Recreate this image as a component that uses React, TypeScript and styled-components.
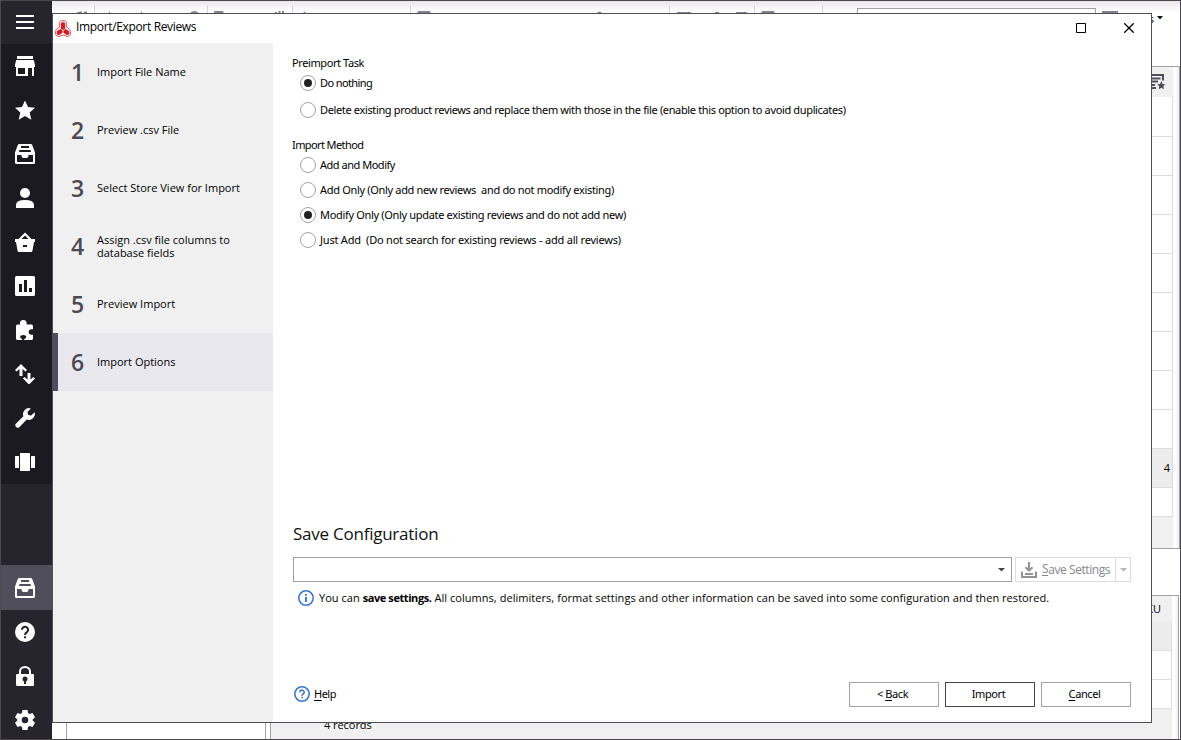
import React from "react";
import styled, { createGlobalStyle, css } from "styled-components";

const UI = `"Open Sans", "Noto Sans", sans-serif`;
const DIALOG_UI = `"Noto Sans", "Open Sans", sans-serif`;

const GlobalStyle = createGlobalStyle`
  * { box-sizing: border-box; }
  body { margin: 0; background: #fff; font-family: ${UI}; font-size: 11px; color: #000; }
`;

const AppFrame = styled.div`
  position: relative;
  display: flex;
  width: 1181px;
  height: 740px;
  overflow: hidden;
  border: 1px solid #4a474e;
  background: #fff;
`;

/* ---------- sidebar ---------- */

const Sidebar = styled.nav`
  display: flex;
  flex-direction: column;
  width: 51px;
  flex: none;
  background: #26252d;
`;

const NavGroup = styled.div`
  background: #1b1a20;
`;

const NavItem = styled.div<{ $active?: boolean; $first?: boolean }>`
  display: flex;
  align-items: center;
  height: ${(p) => (p.$first ? 43 : 44)}px;
  padding: ${(p) => (p.$first ? "0 0 1px 14px" : "0 0 0 14px")};
  flex: none;
  background: ${(p) => (p.$active ? "#504e5a" : "transparent")};
  box-shadow: ${(p) => (p.$active ? "0 -1px 0 #504e5a" : "none")};
  svg { display: block; }
`;

const NavSpacer = styled.div`
  height: 82px;
  flex: none;
`;

/* ---------- window behind the dialog ---------- */

const Main = styled.div`
  display: flex;
  flex-direction: column;
  flex: 1;
  min-width: 0;
  height: 738px;
`;

const Toolbar = styled.div`
  display: flex;
  height: 65px;
  flex: none;
  padding-top: 4px;
  background: linear-gradient(#e9e7eb, #f7f6f8 7px, #fff 12px);
`;

const ToolGroup = styled.div<{ $w: number }>`
  width: ${(p) => p.$w}px;
  height: 46px;
  flex: none;
  border-right: 1px solid #d5d4d8;
  svg { display: block; }
`;

const SearchBox = styled.div`
  width: 239px;
  height: 22px;
  margin: 3px 6px 0 34px;
  flex: none;
  border: 1px solid #a0a0a4;
  background: #fff;
`;

const ToolButton = styled.div`
  width: 16px;
  height: 16px;
  margin: 6px 1px 0 0;
  background: #84828c;
`;

const ViewMenu = styled.div`
  display: flex;
  justify-content: flex-end;
  align-items: center;
  width: 44px;
  height: 18px;
  margin-top: 4px;
  gap: 3px;
  svg { display: block; }
`;

const Grid = styled.section`
  display: flex;
  height: 483px;
  flex: none;
  border-top: 1px solid #a3a2a7;
  border-right: 1px solid #a3a2a7;
  border-bottom: 1px solid #a3a2a7;
`;

const GridRows = styled.div<{ $w: number }>`
  display: flex;
  flex-direction: column;
  flex: none;
  width: ${(p) => p.$w}px;
`;

const GridHead = styled.div<{ $h: number; $pad: number }>`
  display: flex;
  align-items: center;
  justify-content: flex-end;
  height: ${(p) => p.$h}px;
  padding: 0 ${(p) => p.$pad}px 1px 0;
  flex: none;
  background: #f0f0f0;
`;

const GridRow = styled.div<{ $h: number; $selected?: boolean }>`
  display: flex;
  align-items: center;
  justify-content: flex-end;
  height: ${(p) => p.$h}px;
  padding: 0 2px 1px 0;
  flex: none;
  border-right: 1px solid #dcdcdf;
  border-bottom: 1px solid #dcdcdf;
  background: ${(p) => (p.$selected ? "#ececec" : "#fff")};
`;

const GridFoot = styled.div`
  flex: 1;
  background: #f0f0f0;
`;

const ScrollGutter = styled.div`
  flex: 1;
  background: linear-gradient(90deg, #fff 40%, #eeedef);
`;

const Lower = styled.section`
  display: flex;
  flex: 1;
  min-height: 0;
  margin-top: 46px;
  padding-left: 14px;
`;

const TreePane = styled.div`
  width: 200px;
  margin-right: 4px;
  flex: none;
  border: 1px solid #a3a2a7;
  border-bottom: 0;
`;

const DetailPane = styled.div`
  display: flex;
  flex: 1;
  margin-right: 1px;
  border: 1px solid #a3a2a7;
  border-bottom: 0;
`;

const Records = styled.div`
  display: flex;
  align-items: flex-end;
  width: 500px;
  flex: none;
  padding: 0 0 7px 53px;
  letter-spacing: -0.05px;
  background: #f0f0f0;
`;

/* ---------- dialog ---------- */

const Dialog = styled.div`
  position: absolute;
  left: 51px;
  top: 12px;
  width: 1100px;
  height: 710px;
  display: flex;
  flex-direction: column;
  border: 1px solid #4f4d57;
  background: #fff;
`;

const TitleBar = styled.header`
  display: flex;
  height: 29px;
  flex: none;
  padding: 0 17px 0 2px;
  svg { display: block; flex: none; }
`;

const Title = styled.div`
  flex: 1;
  margin-left: 5px;
  font-size: 12px;
  line-height: 26px;
  letter-spacing: -0.34px;
`;

const TitleControls = styled.div`
  display: flex;
  gap: 38px;
  padding-top: 9px;
`;

const DialogBody = styled.div`
  display: flex;
  flex: 1;
  min-height: 0;
`;

const Steps = styled.ol`
  width: 220px;
  margin: 0;
  padding: 0;
  flex: none;
  list-style: none;
  background: #f0f0f0;
`;

const Step = styled.li<{ $active?: boolean }>`
  display: flex;
  align-items: center;
  height: 58px;
  border-left: 5px solid ${(p) => (p.$active ? "#504e5a" : "transparent")};
  background: ${(p) => (p.$active ? "#e9e8ee" : "transparent")};
  background-clip: padding-box;
`;

const StepNumber = styled.span`
  width: 39px;
  padding-left: 13px;
  flex: none;
  font: 600 23px/32px ${UI};
  color: #4b4952;
`;

const StepLabel = styled.span`
  width: 160px;
  line-height: 13px;
  padding-bottom: 1px;
  letter-spacing: 0;
  white-space: pre-line;
`;

const Content = styled.main`
  display: flex;
  flex-direction: column;
  flex: 1;
  padding: 12px 20px 15px 20px;
`;

const GroupTitle = styled.div<{ $top?: number; $ls: number }>`
  height: 16px;
  margin-top: ${(p) => p.$top ?? 0}px;
  margin-left: -1px;
  font-family: ${DIALOG_UI};
  line-height: 16px;
  letter-spacing: ${(p) => p.$ls}px;
`;

const Radios = styled.div<{ $gap: number; $top: number }>`
  display: flex;
  flex-direction: column;
  gap: ${(p) => p.$gap}px;
  margin-top: ${(p) => p.$top}px;
  padding-left: 7px;
`;

const RadioRow = styled.label<{ $ls: number }>`
  display: flex;
  align-items: center;
  height: 16px;
  gap: 4px;
  font-family: ${DIALOG_UI};
  line-height: 16px;
  letter-spacing: ${(p) => p.$ls}px;
  white-space: pre;
`;

const RadioMark = styled.span<{ $checked?: boolean }>`
  display: flex;
  align-items: center;
  justify-content: center;
  width: 16px;
  height: 16px;
  border: 1px solid #a3a3a3;
  border-radius: 50%;
  ${(p) =>
    p.$checked &&
    css`
      &::after {
        content: "";
        width: 8px;
        height: 8px;
        border-radius: 50%;
        background: #222;
      }
    `}
`;

const SaveTitle = styled.h2`
  margin: auto 0 0;
  height: 26px;
  font: 400 17px/26px ${UI};
  letter-spacing: -0.24px;
  color: #111;
`;

const SaveRow = styled.div`
  display: flex;
  gap: 3px;
  margin-top: 10px;
`;

const Combo = styled.div`
  display: flex;
  align-items: center;
  justify-content: flex-end;
  width: 719px;
  height: 25px;
  padding-right: 6px;
  border: 1px solid #a0a0a4;
`;

const SplitButton = styled.div`
  display: flex;
  width: 116px;
  height: 25px;
  border: 1px solid #dcdcdf;
  color: #88868e;
`;

const SplitMain = styled.div`
  display: flex;
  align-items: center;
  width: 100px;
  padding-left: 5px;
  gap: 5px;
  border-right: 1px solid #dcdcdf;
  font-size: 12px;
  letter-spacing: -0.42px;
  white-space: nowrap;
  svg { flex: none; }
  span { position: relative; top: -0.5px; }
`;

const SplitArrow = styled.div`
  display: flex;
  flex: 1;
  align-items: center;
  justify-content: center;
`;

const InfoLine = styled.div`
  display: flex;
  align-items: center;
  height: 16px;
  margin-top: 8px;
  padding-left: 5px;
  gap: 5px;
  line-height: 14px;
  letter-spacing: 0.045px;
  white-space: nowrap;
  span { padding-bottom: 1px; }
  b { font-weight: 700; letter-spacing: -0.42px; }
`;

const Footer = styled.footer`
  display: flex;
  align-items: center;
  height: 25px;
  margin-top: 76px;
  gap: 6px;
`;

const HelpLink = styled.div`
  display: flex;
  align-items: center;
  flex: 1;
  gap: 4px;
  padding-left: 1px;
  font-family: ${DIALOG_UI};
  letter-spacing: -0.5px;
  svg { margin-bottom: 1px; }
  span { line-height: 16px; }
  > span { padding-bottom: 2px; }
`;

const Button = styled.button<{ $primary?: boolean }>`
  width: 90px;
  height: 25px;
  padding: 0 3px 2px 0;
  border: 1px solid ${(p) => (p.$primary ? "#45434c" : "#a3a2a7")};
  background: #fff;
  font: 11px/20px ${DIALOG_UI};
  letter-spacing: -0.4px;
  color: #000;
`;

const Key = styled.span`
  text-decoration: underline;
  text-underline-offset: 2px;
`;

/* ---------- icons ---------- */

const NavSvg = ({ children }: { children: React.ReactNode }) => (
  <svg width="20" height="20" viewBox="0 0 20 20" fill="#fff">{children}</svg>
);

const MenuIcon = () => (
  <NavSvg><path d="M1 3h18v2H1zM1 9h18v2H1zM1 15h18v2H1z" /></NavSvg>
);
const StoreIcon = () => (
  <NavSvg>
    <path fillRule="evenodd" d="M2 0h16v3H2zM1.200 4h17.600l1.200 5v2h-1v9h-2v-8h-4v8H1v-9H0V9zM3 12v6h7v-6z" />
  </NavSvg>
);
const StarIcon = () => (
  <NavSvg><path d="M10 .4l3 6.600 7 .7-5.300 4.800 1.600 7.200L10 15.900 3.700 19.700l1.600-7.200L0 7.700 7 7z" /></NavSvg>
);
const DrawerIcon = () => (
  <NavSvg>
    <path fillRule="evenodd" d="M4.200 0h11.600q1 0 1.400 1L20 8.500V18.500q0 1.500-1.500 1.500H1.500Q0 20 0 18.500V8.500L2.800 1q.4-1 1.400-1zM6 2v2h8V2zM4.500 6L4 8h12l-.5-2zM2 11v7h16v-7h-4.500q0 3-2 3h-3q-2 0-2-3z" />
  </NavSvg>
);
const PersonIcon = () => (
  <NavSvg><circle cx="10" cy="5" r="5" /><path d="M1 20v-3q0-5 9-5t9 5v3z" /></NavSvg>
);
const BasketIcon = () => (
  <NavSvg>
    <path fillRule="evenodd" d="M0 7h3.500L10 .4 16.500 7H20v3h-1l-1.500 8.500q-.3 1.500-1.500 1.500h-12Q2.800 20 2.500 18.500L1 10H0zM6.500 7h7L10 3.500zM8 13v2h4v-2z" />
  </NavSvg>
);
const ChartIcon = () => (
  <NavSvg>
    <path fillRule="evenodd" d="M1.500 0h17Q20 0 20 1.500v17q0 1.500-1.500 1.500h-17Q0 20 0 18.500v-17Q0 0 1.500 0zM4 8v8h3V8zM9 4v12h3V4zM14 12v4h3v-4z" />
  </NavSvg>
);
const PuzzleIcon = () => (
  <NavSvg>
    <path d="M2.500 4.500H5V3.300a3.300 3.300 0 0 1 6.600 0v1.200h4.900q1.500 0 1.500 1.500v3.200h-1.500a2.800 2.800 0 1 0 0 5.600H18v3.700q0 1.500-1.500 1.500h-14Q1 20 1 18.500V6q0-1.500 1.500-1.500z" />
    <ellipse cx="8.200" cy="17" rx="3" ry="1.900" fill="#1b1a20" />
    <path d="M7.200 17h2v3h-2z" fill="#1b1a20" />
  </NavSvg>
);
const SwapIcon = () => (
  <NavSvg><path d="M6 0l6 6-1.500 1.500L7.500 5v7h-3V5L1.500 7.500 0 6zM14 20.600L8 14.600l1.500-1.500 3 2.500V9h3v6.600l3-2.500 1.500 1.500z" /></NavSvg>
);
const WrenchIcon = () => (
  <NavSvg>
    <path d="M15.800.4a6 6 0 0 0-7.400 7.800L.6 16a2 2 0 0 0 0 2.200l1.200 1.200a2 2 0 0 0 2.200 0l7.800-7.800A6 6 0 0 0 19.600 4.200l-3.500 3.300-3-.6-.6-3z" />
  </NavSvg>
);
const CarouselIcon = () => (
  <NavSvg>
    <rect y="4" width="4" height="12" rx=".5" /><rect x="5" y="1" width="10" height="18" rx=".5" /><rect x="16" y="4" width="4" height="12" rx=".5" />
  </NavSvg>
);
const HelpIcon = () => (
  <NavSvg>
    <circle cx="10" cy="10" r="10" />
    <path d="M6.900 7.800a3.100 3 0 1 1 5.300 2.100q-2.200 1.500-2.200 3" fill="none" stroke="#26252d" strokeWidth="2" />
    <path d="M9 14.300h2v2H9z" fill="#26252d" />
  </NavSvg>
);
const LockIcon = () => (
  <NavSvg>
    <path d="M5 9V5.500a5 4.500 0 0 1 10 0V9" fill="none" stroke="#fff" strokeWidth="2" />
    <rect x="1" y="8" width="18" height="12" rx="1.300" />
    <circle cx="10" cy="13" r="2.500" fill="#26252d" /><path d="M9 13h2v5H9z" fill="#26252d" />
  </NavSvg>
);
const GearIcon = () => (
  <NavSvg>
    <path fillRule="evenodd" d="M7.500 0h5l.6 3 1.500.9L17.500 3 20 7.200 17.800 9.200v1.600L20 12.800 17.500 17l-2.900-.9-1.500.9-.6 3h-5l-.6-3-1.500-.9L2.500 17 0 12.800l2.200-2V9.200L0 7.200 2.500 3l2.900.9L6.900 3zM10 6.700a3.300 3.300 0 1 0 0 6.600 3.300 3.300 0 0 0 0-6.600z" />
  </NavSvg>
);

const CaretIcon = ({ color = "#45434c", width = 7 }: { color?: string; width?: number }) => (
  <svg width={width} height="4" viewBox="0 0 7 4" preserveAspectRatio="none"><path d="M0 0h7L3.500 3.600z" fill={color} /></svg>
);

const LogoIcon = () => (
  <svg width="16" height="29" viewBox="0 0 16 29">
    <path d="M4.300 8.500Q4.500 6.700 8 6.500q3.500.2 3.700 2v5q3.800 1.300 3.800 3.800v3.200q-1 2-3.500 2l-4-1.600-4 1.600q-2.500 0-3.500-2v-3.200q0-2.500 3.800-3.800z" fill="#fff" stroke="#e0575c" strokeWidth="1" />
    <path d="M5.800 9L8 8l2.200 1v5.700L8 16l-2.200-1.300z" fill="#cf1f2b" />
    <path d="M7.600 16.500v2.200L4 21.300l-2.300-1v-3.100L5.400 15zM8.400 16.500v2.200l3.600 2.600 2.300-1v-3.100L10.600 15z" fill="#cf1f2b" />
  </svg>
);

const MaximizeIcon = () => (
  <svg width="10" height="10" viewBox="0 0 10 10"><path d="M.5.5h9v9h-9z" fill="none" stroke="#000" /></svg>
);
const CloseIcon = () => (
  <svg width="10" height="10" viewBox="0 0 10 10"><path d="M.3.3l9.400 9.400M9.700.3L.3 9.700" stroke="#000" strokeWidth="1.300" /></svg>
);

const DownloadIcon = () => (
  <svg width="16" height="16" viewBox="0 0 16 16" fill="none" stroke="#929198" strokeWidth="2">
    <path d="M8 0v8M4.500 5.200L8 8.700l3.500-3.500M1 9.500V15h14V9.500M4 12h8" />
  </svg>
);

const RingIcon = ({ children }: { children: React.ReactNode }) => (
  <svg width="16" height="16" viewBox="0 0 16 16" fill="none" stroke="#3f76cb">
    <circle cx="8" cy="8" r="7.200" strokeWidth="1.600" />
    {children}
  </svg>
);
const InfoIcon = () => (
  <RingIcon><path d="M8 4v1.800M8 7v5" strokeWidth="1.900" /></RingIcon>
);
const QuestionIcon = () => (
  <RingIcon><path d="M5.800 6.300a2.200 2 0 1 1 3.500 1.500Q8 8.600 8 9.700M8 10.700v1.500" strokeWidth="1.600" /></RingIcon>
);

const RatingListIcon = () => (
  <svg width="16" height="17" viewBox="0 0 16 17">
    <path d="M1 2h13V7.500M1 5.500h10.500M1 8.500h8M1 12h5M1 15h6" fill="none" stroke="#504e5a" strokeWidth="2" />
    <path d="M12.300 8l1.300 2.900 2.800.3-2 2.100.4 3-2.500-1.500-2.500 1.500.4-3-2-2.100 2.800-.3z" fill="#504e5a" />
  </svg>
);

/* ---------- data ---------- */

const navIcons = [StoreIcon, StarIcon, DrawerIcon, PersonIcon, BasketIcon, ChartIcon, PuzzleIcon, SwapIcon, WrenchIcon, CarouselIcon];

const toolGroups = [
  { w: 43, d: "M23 9q2-3 7-2.500V9zM32 6.500h3V9h-3z" },
  { w: 113, d: "M13 9l1.500-2.500L16 9zM45 9l1.500-2.500L48 9zM94 9q5-6 11 0z" },
  { w: 85, d: "M6 9V7q0-1 1-1h8l1 3zM67 7h2v2h-2zM70.500 6h2v3h-2zM74 6h2v3h-2z" },
  { w: 118, d: "M9 9l2.500-2.500L14 9z" },
  { w: 259, d: "M6 9q0-3 2-3h10q2 0 2 3zM185 9q3.500-5 7 0z" },
  { w: 85, d: "M7 7h14v2H7zM45 7h4v2h-4zM66 7h11v2H66z" },
  { w: 68, d: "M6 9q0-3 2-3h10q2 0 2 3z" },
];

const steps = [
  "Import File Name",
  "Preview .csv File",
  "Select Store View for Import",
  "Assign .csv file columns to\ndatabase fields",
  "Preview Import",
  "Import Options",
];

type Option = { label: string; ls: number; checked?: boolean };

const preimport: Option[] = [
  { label: "Do nothing", checked: true, ls: -0.6 },
  { label: "Delete existing product reviews and replace them with those in the file (enable this option to avoid duplicates)", ls: -0.355 },
];

const methods: Option[] = [
  { label: "Add and Modify", ls: -0.48 },
  { label: "Add Only (Only add new reviews  and do not modify existing)", ls: -0.32 },
  { label: "Modify Only (Only update existing reviews and do not add new)", checked: true, ls: -0.325 },
  { label: "Just Add  (Do not search for existing reviews - add all reviews)", ls: -0.21 },
];

const RadioList = ({ items, gap, top }: { items: Option[]; gap: number; top: number }) => (
  <Radios $gap={gap} $top={top}>
    {items.map((o) => (
      <RadioRow key={o.label} $ls={o.ls}>
        <RadioMark $checked={o.checked} />
        {o.label}
      </RadioRow>
    ))}
  </Radios>
);

export default function App() {
  return (
    <>
      <GlobalStyle />
      <AppFrame>
        <Sidebar>
          <NavItem $first><MenuIcon /></NavItem>
          <NavGroup>
            {navIcons.map((Icon, i) => (
              <NavItem key={i}><Icon /></NavItem>
            ))}
          </NavGroup>
          <NavSpacer />
          <NavItem $active><DrawerIcon /></NavItem>
          <NavItem><HelpIcon /></NavItem>
          <NavItem><LockIcon /></NavItem>
          <NavItem><GearIcon /></NavItem>
        </Sidebar>

        <Main>
          <Toolbar>
            {toolGroups.map((g, i) => (
              <ToolGroup key={i} $w={g.w}>
                <svg width={g.w - 1} height="10"><path d={g.d} fill="#84828c" /></svg>
              </ToolGroup>
            ))}
            <SearchBox />
            <ToolButton />
            <ViewMenu>s<CaretIcon color="#111" width={6} /></ViewMenu>
          </Toolbar>
          <Grid>
            <GridRows $w={1121}>
              <GridHead $h={30} $pad={8}><RatingListIcon /></GridHead>
              {Array.from({ length: 9 }, (_, i) => (
                <GridRow key={i} $h={i === 0 ? 40 : 39} />
              ))}
              <GridRow $h={39} $selected>4</GridRow>
              <GridRow $h={29} />
              <GridFoot />
            </GridRows>
            <ScrollGutter />
          </Grid>
          <Lower>
            <TreePane />
            <DetailPane>
              <Records>4 records</Records>
              <GridRows $w={401}>
                <GridHead $h={26} $pad={11}>SKU</GridHead>
                <GridRow $h={29} $selected />
                <GridRow $h={29} />
                <GridRow $h={29} />
                <GridFoot />
              </GridRows>
              <ScrollGutter />
            </DetailPane>
          </Lower>
        </Main>

        <Dialog>
          <TitleBar>
            <LogoIcon />
            <Title>Import/Export Reviews</Title>
            <TitleControls>
              <MaximizeIcon />
              <CloseIcon />
            </TitleControls>
          </TitleBar>
          <DialogBody>
            <Steps>
              {steps.map((s, i) => (
                <Step key={s} $active={i === 5}>
                  <StepNumber>{i + 1}</StepNumber>
                  <StepLabel>{s}</StepLabel>
                </Step>
              ))}
            </Steps>
            <Content>
              <GroupTitle $ls={-0.4}>Preimport Task</GroupTitle>
              <RadioList items={preimport} gap={11} top={4} />
              <GroupTitle $top={19} $ls={-0.6}>Import Method</GroupTitle>
              <RadioList items={methods} gap={9} top={4} />
              <SaveTitle>Save Configuration</SaveTitle>
              <SaveRow>
                <Combo><CaretIcon /></Combo>
                <SplitButton>
                  <SplitMain>
                    <DownloadIcon />
                    <span><Key>S</Key>ave Settings</span>
                  </SplitMain>
                  <SplitArrow><CaretIcon color="#b5b4ba" /></SplitArrow>
                </SplitButton>
              </SaveRow>
              <InfoLine>
                <InfoIcon />
                <span>
                  You can <b>save settings.</b> All columns, delimiters, format settings and other information can be saved into some configuration and then restored.
                </span>
              </InfoLine>
              <Footer>
                <HelpLink><QuestionIcon /><span><Key>H</Key>elp</span></HelpLink>
                <Button>&lt; <Key>B</Key>ack</Button>
                <Button $primary>Import</Button>
                <Button><Key>C</Key>ancel</Button>
              </Footer>
            </Content>
          </DialogBody>
        </Dialog>
      </AppFrame>
    </>
  );
}
